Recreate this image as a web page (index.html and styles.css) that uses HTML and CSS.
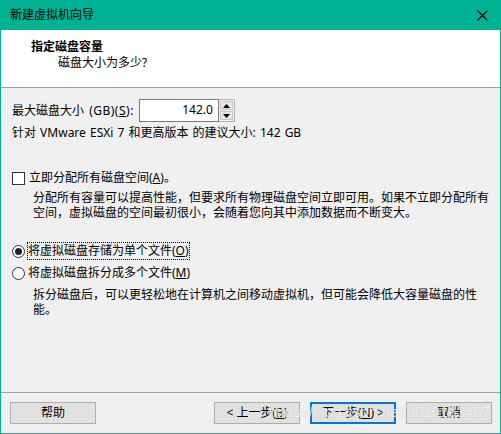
FILE: index.html
```html
<!DOCTYPE html>
<html lang="zh-CN">
<head>
<meta charset="utf-8">
<title>新建虚拟机向导</title>
<link rel="stylesheet" href="styles.css">
</head>
<body>
<div class="window">
  <div class="titlebar">
    <span class="title">新建虚拟机向导</span>
    <svg class="close" width="11" height="11" viewBox="0 0 11 11"><path d="M0.5 0.5L10.5 10.5M10.5 0.5L0.5 10.5" stroke="#000" stroke-width="1.1" fill="none"/></svg>
  </div>
  <div class="header">
    <div class="h-title">指定磁盘容量</div>
    <div class="h-sub">磁盘大小为多少?</div>
  </div>
  <div class="content">
    <div class="row size-row">
      <span class="label">最大磁盘大小 <span class="latin">(GB)(<u>S</u>):</span></span>
      <div class="spin">
        <div class="spin-input">142.0</div>
        <div class="spin-btns">
          <div class="sb"><svg width="7" height="4" viewBox="0 0 7 4"><path d="M3.5 0L7 4H0Z" fill="#000"/></svg></div>
          <div class="sb"><svg width="7" height="4" viewBox="0 0 7 4"><path d="M0 0H7L3.5 4Z" fill="#000"/></svg></div>
        </div>
      </div>
    </div>
    <div class="line recommend">针对 VMware ESXi 7 和更高版本 的建议大小: 142 GB</div>
    <div class="row check-row">
      <span class="checkbox"></span>
      <span class="label">立即分配所有磁盘空间(<u>A</u>)。</span>
    </div>
    <div class="desc desc1">分配所有容量可以提高性能，但要求所有物理磁盘空间立即可用。如果不立即分配所有<br>空间，虚拟磁盘的空间最初很小，会随着您向其中添加数据而不断变大。</div>
    <div class="row radio-row r1">
      <span class="radio checked"></span>
      <span class="label focus">将虚拟磁盘存储为单个文件(<u>O</u>)</span>
    </div>
    <div class="row radio-row r2">
      <span class="radio"></span>
      <span class="label">将虚拟磁盘拆分成多个文件(<u>M</u>)</span>
    </div>
    <div class="desc desc2">拆分磁盘后，可以更轻松地在计算机之间移动虚拟机，但可能会降低大容量磁盘的性<br>能。</div>
  </div>
  <div class="footer">
    <button class="btn">帮助</button>
    <div class="btn-group">
      <button class="btn">&lt; 上一步(<u>B</u>)</button>
      <button class="btn primary">下一步(<u>N</u>) &gt;</button>
      <button class="btn">取消</button>
    </div>
    <div class="watermark">https://blog.csdn.net/u010163467</div>
  </div>
</div>
</body>
</html>
```

FILE: styles.css
```css
* { box-sizing: border-box; }
html, body { margin: 0; padding: 0; }
body {
  width: 501px;
  height: 434px;
  overflow: hidden;
  font-family: "Noto Sans", "Noto Sans CJK SC", sans-serif;
  font-size: 12px;
  color: #000;
  background: #f0f0f0;
}
.window {
  width: 501px;
  height: 434px;
  display: flex;
  flex-direction: column;
  border: 1px solid #00b294;
  border-top: none;
  background: #f0f0f0;
  position: relative;
}
.titlebar {
  height: 30px;
  margin: 0 -1px;
  background: #00b294;
  display: flex;
  align-items: center;
  justify-content: space-between;
  padding: 0 13px 0 10px;
}
.title { font-size: 12px; line-height: 16px; }
.close { display: block; }
.header {
  height: 58px;
  background: #fff;
  border-bottom: 1px solid #a0a0a0;
  padding-top: 9px;
  line-height: 16px;
}
.h-title { font-weight: bold; padding-left: 30px; }
.h-sub { padding-left: 57px; }
.content {
  flex: 1;
  padding-left: 11px;
}
.row { display: flex; align-items: center; }
.label { line-height: 16px; white-space: nowrap; }
.size-row { margin-top: 11px; height: 23px; }
.size-row .label { word-spacing: 2px; }
.latin { letter-spacing: 0.5px; }
.spin { display: flex; margin-left: 5px; height: 23px; }
.spin-input {
  width: 80px;
  height: 23px;
  border: 1px solid #7a7a7a;
  background: #fff;
  text-align: right;
  padding-right: 5px;
  line-height: 20px;
}
.spin-btns {
  width: 16px;
  height: 23px;
  border: 1px solid #b4b4b4;
  border-left: none;
  display: flex;
  flex-direction: column;
  gap: 1px;
  padding: 1px;
  background: #f0f0f0;
}
.sb {
  flex: 1;
  background: #e6e6e6;
  border: 1px solid #c8c8c8;
  display: flex;
  align-items: center;
  justify-content: center;
}
.sb svg { display: block; }
.line { line-height: 16px; }
.recommend { margin-top: 3px; word-spacing: 1px; }
.check-row { margin-top: 29px; height: 16px; }
.checkbox {
  width: 13px;
  height: 13px;
  border: 1px solid #333;
  background: #fff;
  margin-right: 4px;
  flex: none;
}
.desc {
  padding-left: 21px;
  line-height: 15px;
}
.desc1 { margin-top: 4px; }
.r1 { margin-top: 23px; height: 16px; }
.r2 { margin-top: 6px; height: 16px; }
.radio {
  width: 13px;
  height: 13px;
  border: 1px solid #333;
  border-radius: 50%;
  background: #fff;
  margin-right: 3px;
  flex: none;
  display: flex;
  align-items: center;
  justify-content: center;
}
.radio.checked::after {
  content: "";
  width: 7px;
  height: 7px;
  border-radius: 50%;
  background: #222;
}
.focus { outline: 1px dotted #000; outline-offset: 0; }
.desc2 { margin-top: 6px; }
.footer {
  height: 41px;
  border-top: 1px solid #a0a0a0;
  padding: 9px 8px 0 9px;
  display: flex;
  justify-content: space-between;
  align-items: flex-start;
  position: relative;
}
.btn-group { display: flex; gap: 10px; }
.btn {
  width: 86px;
  height: 22px;
  background: #e1e1e1;
  border: 1px solid #adadad;
  font-family: "Noto Sans", "Noto Sans CJK SC", sans-serif;
  font-size: 12px;
  color: #000;
  padding: 0;
  line-height: 18px;
}
.btn.primary { border: 2px solid #0078d7; }
.watermark {
  position: absolute;
  left: 267px;
  top: 10px;
  font-family: "Liberation Sans", sans-serif;
  font-size: 15px;
  line-height: 17px;
  color: rgba(255, 255, 255, 0.75);
  text-shadow: 0 0 1px rgba(120, 120, 120, 0.35);
  pointer-events: none;
  white-space: nowrap;
}
```
